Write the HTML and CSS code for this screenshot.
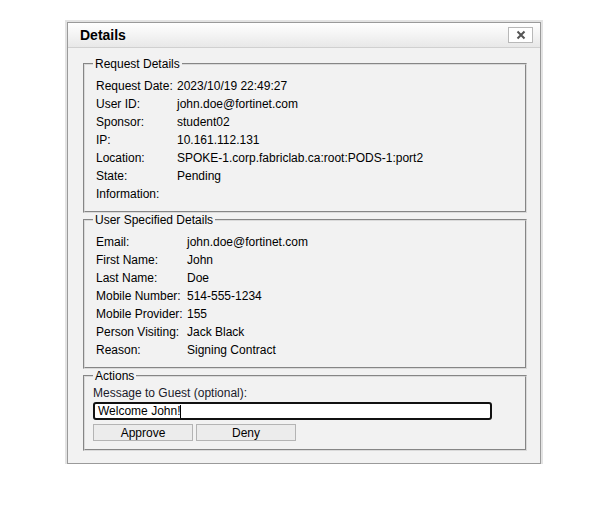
FILE: index.html
```html
<!DOCTYPE html>
<html>
<head>
<meta charset="utf-8">
<link rel="stylesheet" href="styles.css">
</head>
<body>
<div class="dialog">
  <div class="titlebar">
    <span class="title">Details</span>
    <button class="close" aria-label="Close">
      <svg width="10" height="10" viewBox="0 0 10 10"><path d="M1.5 1.5 L8.5 8.5 M8.5 1.5 L1.5 8.5" stroke="#555" stroke-width="2" fill="none"/></svg>
    </button>
  </div>
  <div class="body">
    <fieldset class="group">
      <legend>Request Details</legend>
      <div class="rows rows-a">
        <span>Request Date:</span><span>2023/10/19 22:49:27</span>
        <span>User ID:</span><span>john.doe@fortinet.com</span>
        <span>Sponsor:</span><span>student02</span>
        <span>IP:</span><span>10.161.112.131</span>
        <span>Location:</span><span>SPOKE-1.corp.fabriclab.ca:root:PODS-1:port2</span>
        <span>State:</span><span>Pending</span>
        <span>Information:</span><span></span>
      </div>
    </fieldset>
    <fieldset class="group">
      <legend>User Specified Details</legend>
      <div class="rows rows-b">
        <span>Email:</span><span>john.doe@fortinet.com</span>
        <span>First Name:</span><span>John</span>
        <span>Last Name:</span><span>Doe</span>
        <span>Mobile Number:</span><span>514-555-1234</span>
        <span>Mobile Provider:</span><span>155</span>
        <span>Person Visiting:</span><span>Jack Black</span>
        <span>Reason:</span><span>Signing Contract</span>
      </div>
    </fieldset>
    <fieldset class="group actions">
      <legend>Actions</legend>
      <div class="msg-label">Message to Guest (optional):</div>
      <div class="msg-input">Welcome John!<span class="caret"></span></div>
      <div class="buttons">
        <button class="btn">Approve</button>
        <button class="btn">Deny</button>
      </div>
    </fieldset>
  </div>
</div>
</body>
</html>
```

FILE: styles.css
```css
html, body {
  margin: 0;
  padding: 0;
  background: #fff;
}
body {
  font-family: "Liberation Sans", Arial, sans-serif;
  font-size: 12px;
  color: #000;
  padding: 22px 0 0 67px;
}
.dialog {
  box-sizing: border-box;
  width: 474px;
  height: 442px;
  background: #f2f2f2;
  border: 1px solid #9a9a9a;
  box-shadow: 0 0 0 2px #e3e3e3;
  display: flex;
  flex-direction: column;
}
.titlebar {
  height: 24px;
  border-bottom: 1px solid #d0d0d0;
  background: linear-gradient(#ffffff, #e8e8e8);
  display: flex;
  align-items: center;
  justify-content: space-between;
  padding: 0 7px 0 12px;
}
.title {
  font-weight: bold;
  font-size: 14px;
}
.close {
  box-sizing: border-box;
  width: 25px;
  height: 16px;
  margin: 0;
  padding: 0;
  background: #fff;
  border: 1px solid #b8b8b8;
  display: flex;
  align-items: center;
  justify-content: center;
}
.body {
  padding: 9px 13px 0 15px;
  display: flex;
  flex-direction: column;
}
.group {
  margin: 0;
  padding: 6px 8px 8px 8px;
  border: 2px groove #dadada;
  min-width: 0;
}
.group legend {
  padding: 0 2px;
  line-height: 14px;
  font-size: 12px;
}
.rows {
  display: grid;
  grid-auto-rows: 18px;
  align-items: center;
  padding-left: 3px;
  white-space: nowrap;
}
.rows-a {
  grid-template-columns: 81px 1fr;
}
.rows-b {
  grid-template-columns: 91px 1fr;
}
.actions {
  padding-top: 2px;
  padding-bottom: 8px;
}
.msg-label {
  line-height: 17px;
  color: #1a1a2a;
}
.msg-input {
  box-sizing: border-box;
  width: 399px;
  height: 18px;
  border: 2px solid #111;
  border-radius: 3px;
  background: #fff;
  padding: 0 3px;
  line-height: 14px;
  display: flex;
  align-items: center;
}
.caret {
  display: inline-block;
  width: 1px;
  height: 13px;
  background: #000;
  margin-left: 0;
}
.buttons {
  display: flex;
  gap: 3px;
  margin-top: 4px;
}
.btn {
  box-sizing: border-box;
  width: 100px;
  height: 17px;
  margin: 0;
  padding: 0;
  font-family: "Liberation Sans", Arial, sans-serif;
  font-size: 12px;
  color: #000;
  background: #ececec;
  border: 1px solid #b4b4b4;
  border-radius: 0;
}
```
